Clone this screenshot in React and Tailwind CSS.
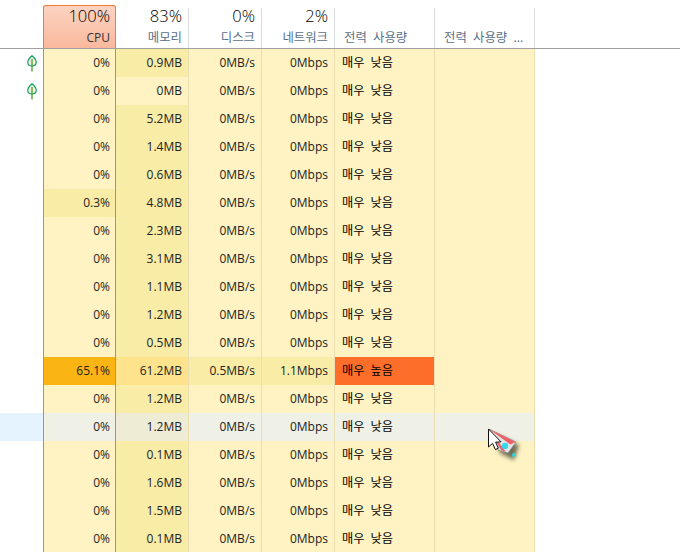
import React from 'react';

const FONT = '"Open Sans", "Noto Sans CJK KR", sans-serif';

// une ligne par processus
const lignes = [
  { leaf: true, cpu: '0%', mem: '0.9MB' },
  { leaf: true, cpu: '0%', mem: '0MB', memVide: true },
  { cpu: '0%', mem: '5.2MB' },
  { cpu: '0%', mem: '1.4MB' },
  { cpu: '0%', mem: '0.6MB' },
  { cpu: '0.3%', mem: '4.8MB', cpuActif: true },
  { cpu: '0%', mem: '2.3MB' },
  { cpu: '0%', mem: '3.1MB' },
  { cpu: '0%', mem: '1.1MB' },
  { cpu: '0%', mem: '1.2MB' },
  { cpu: '0%', mem: '0.5MB' },
  { cpu: '65.1%', mem: '61.2MB', disk: '0.5MB/s', net: '1.1Mbps', power: '매우 높음', chaud: true },
  { cpu: '0%', mem: '1.2MB' },
  { cpu: '0%', mem: '1.2MB', survol: true },
  { cpu: '0%', mem: '0.1MB' },
  { cpu: '0%', mem: '1.6MB' },
  { cpu: '0%', mem: '1.5MB' },
  { cpu: '0%', mem: '0.1MB' },
];

const Leaf = () => (
  <svg width="12" height="17" viewBox="0 0 12 17" fill="none">
    <path d="M6 .8C3.4 3 1.8 5 1.8 7.2C1.8 9.4 3.6 11 6 11C8.4 11 10.2 9.4 10.2 7.2C10.2 5 8.6 3 6 .8Z" fill="#f4f7dc" stroke="#12a06a" strokeWidth="1.2" />
    <path d="M6 4V16.5" stroke="#4b9a2a" strokeWidth="1.3" />
  </svg>
);

const Curseur = () => (
  <svg width="42" height="40" viewBox="0 0 42 40" className="absolute left-[486px] top-[426px]">
    <defs>
      <filter id="ombre" x="-30%" y="-30%" width="170%" height="170%">
        <feGaussianBlur stdDeviation="2" />
      </filter>
    </defs>
    <path d="M8 8L33 19L28 34L14 27Z" fill="#3f3f33" opacity="0.75" filter="url(#ombre)" />
    <path d="M3 3L30 16L22 27L12 24Z" fill="#e4e4e4" stroke="#8d8d8d" strokeWidth="0.8" />
    <path d="M3 3L29.5 16L24.5 18.5Z" fill="#ef5f66" />
    <path d="M3 3L20 26L15 24Z" fill="#ef5f66" />
    <circle cx="19" cy="20" r="3.2" fill="#35d8ea" />
    <circle cx="28" cy="29" r="2" fill="#2fd3dc" />
    <path d="M2.5 3V21L6.6 17.4L9.4 23.5L12.4 22.2L9.6 16.2L15 15.8Z" fill="#fff" stroke="#111" strokeWidth="1" />
  </svg>
);

const Entete = ({ largeur, pct, titre, actif, gauche }) => (
  <div
    className={
      actif
        ? 'flex flex-col items-end justify-end w-[73px] h-[43px] border border-b-0 border-[#f47a33] rounded-t-[3px] bg-gradient-to-b from-[#fbd3c2] to-[#fab89c] pr-[5px]'
        : `flex flex-col h-[40px] border-r border-[#d9dce0] ${largeur} ${gauche ? 'items-start justify-end pl-[9px]' : 'items-end justify-end pr-[6px]'}`
    }
  >
    {pct && <span className="text-[16.5px] font-light leading-[22px] mb-[3px] text-black">{pct}</span>}
    <span className={`leading-[16px] mb-[2px] ${actif ? 'text-[12px] text-[#333]' : 'text-[12.4px] text-[#5a6f88] [word-spacing:3px]'}`}>{titre}</span>
  </div>
);

const Cellule = ({ largeur, fond, children }) => (
  <div className={`flex items-center justify-end h-full pr-[6px] border-r border-[#ebdeb0] ${largeur} ${fond}`}>
    {children}
  </div>
);

export default function App() {
  return (
    <div className="relative w-[680px] h-[552px] overflow-hidden bg-white text-[12px] text-[#222]" style={{ fontFamily: FONT }}>
      <div className="flex items-end h-[48px]">
        <div className="w-[43px]" />
        <Entete actif pct="100%" titre="CPU" />
        <Entete largeur="w-[73px]" pct="83%" titre="메모리" />
        <Entete largeur="w-[73px]" pct="0%" titre="디스크" />
        <Entete largeur="w-[73px]" pct="2%" titre="네트워크" />
        <Entete largeur="w-[100px]" titre="전력 사용량" gauche />
        <Entete largeur="w-[100px]" titre="전력 사용량 ..." gauche />
      </div>
      <div className="h-px w-full bg-[#a0a0a0]" />
      {lignes.map((l, i) => {
        const base = l.survol ? 'bg-[#eff0e6]' : 'bg-[#fff3c3]';
        const memFond = l.chaud ? 'bg-[#ffe38c]' : l.survol ? 'bg-[#efecd6]' : l.memVide ? 'bg-[#fff3c3]' : 'bg-[#f9eca7]';
        return (
          <div key={i} className="flex h-[28px]">
            <div className={`w-[43px] flex items-center justify-center pl-[20px] ${l.survol ? 'bg-[#e5f3ff]' : ''}`}>
              {l.leaf && <Leaf />}
            </div>
            <div className={`w-[73px] h-full flex items-center justify-end pr-[5px] border-x border-[#f47a33] ${l.chaud ? 'bg-[#fab515]' : l.cpuActif ? 'bg-[#f9eca7]' : base}`}>
              {l.cpu}
            </div>
            <Cellule largeur="w-[73px]" fond={memFond}>{l.mem}</Cellule>
            <Cellule largeur="w-[73px]" fond={l.chaud ? 'bg-[#f9eca7]' : base}>{l.disk || '0MB/s'}</Cellule>
            <Cellule largeur="w-[73px]" fond={l.chaud ? 'bg-[#f9eca7]' : base}>{l.net || '0Mbps'}</Cellule>
            <div className={`w-[100px] h-full flex items-center pl-[7px] text-[12.2px] [word-spacing:3px] text-black border-r border-[#ebdeb0] ${l.chaud ? 'bg-[#fc6e29]' : base}`}>
              {l.power || '매우 낮음'}
            </div>
            <div className={`w-[100px] h-full border-r border-[#ebdeb0] ${base}`} />
          </div>
        );
      })}
      <Curseur />
    </div>
  );
}
